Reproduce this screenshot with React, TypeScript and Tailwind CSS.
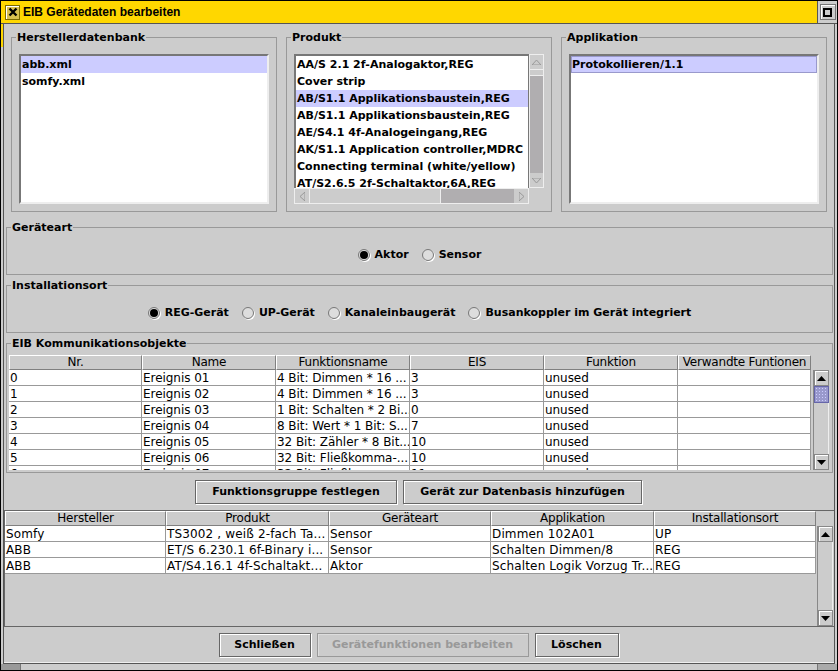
const font = "[font-family:'DejaVu_Sans',sans-serif]";

function Group({ title, className, children }: { title: string; className: string; children?: React.ReactNode }) {
  return (
    <div className={"relative border border-[#999999] " + className}>
      <span className="absolute left-[4px] top-[-8px] bg-[#cccccc] px-[1px] text-[11px] font-bold leading-[16px] text-black whitespace-nowrap">
        {title}
      </span>
      {children}
    </div>
  );
}

function ListRow({ text, selected, focus }: { text: string; selected?: boolean; focus?: boolean }) {
  return (
    <div
      className={
        "h-[17px] shrink-0 whitespace-nowrap text-[11px] font-bold text-black " +
        (selected ? "bg-[#ccccff] " : "") +
        (focus ? "border border-[#9999cc] leading-[15px]" : "pl-[1px] leading-[17px]")
      }
    >
      {text}
    </div>
  );
}

function ListBox({ children }: { children: React.ReactNode }) {
  return (
    <div className="h-[150px] w-[250px] overflow-hidden border-2 border-[#777777] border-r-[#eeeeee] border-b-[#eeeeee] bg-white">
      {children}
    </div>
  );
}

function Radio({ label, on }: { label: string; on?: boolean }) {
  return (
    <div className="flex items-center gap-[5px]">
      <span className="flex h-[12px] w-[12px] items-center justify-center rounded-full border border-[#777777] bg-[#dddddd] shadow-[1px_1px_0_#ffffff]">
        {on && <span className="h-[8px] w-[8px] rounded-full bg-black" />}
      </span>
      <span className="text-[11px] font-bold leading-[16px] text-black whitespace-nowrap">{label}</span>
    </div>
  );
}

function Btn({ label, w, disabled }: { label: string; w: string; disabled?: boolean }) {
  return (
    <div
      className={
        "flex h-[24px] items-center justify-center text-[11px] font-bold whitespace-nowrap " +
        w +
        (disabled
          ? " border border-[#999999] text-[#999999] shadow-[inset_1px_1px_0_#dddddd]"
          : " border border-[#666666] text-black shadow-[1px_1px_0_#ffffff,inset_1px_1px_0_#ffffff]")
      }
    >
      {label}
    </div>
  );
}

function Head({ label, w }: { label: string; w: string }) {
  return (
    <div
      className={
        "h-[15px] shrink-0 whitespace-nowrap overflow-hidden border-t border-l border-t-[#ffffff] border-l-[#ffffff] border-r border-b border-r-[#808080] border-b-[#808080] text-center text-[12px] leading-[13px] tracking-[-0.2px] text-black " +
        w
      }
    >
      {label}
    </div>
  );
}

function Cell({ text, w, track }: { text: string; w: string; track: string }) {
  return (
    <div
      className={
        "h-[16px] shrink-0 overflow-hidden whitespace-nowrap border-r border-b border-[#999999] bg-white pl-[1px] pt-[1px] text-[12px] leading-[14px] text-black " +
        track +
        " " +
        w
      }
    >
      {text}
    </div>
  );
}

function Tri({ up, faded }: { up?: boolean; faded?: boolean }) {
  return (
    <svg width="9" height="5" viewBox="0 0 9 5">
      <polygon points={up ? "4.5,0 9,5 0,5" : "0,0 9,0 4.5,5"} fill={faded ? "none" : "#000000"} stroke={faded ? "#999999" : "none"} />
    </svg>
  );
}

function MetalBar({ h, thumb }: { h: string; thumb?: boolean }) {
  return (
    <div className={"flex w-[16px] shrink-0 flex-col border-l border-[#888888] bg-[#cccccc] " + h}>
      <div className="flex h-[16px] shrink-0 items-center justify-center border border-[#888888] shadow-[inset_1px_1px_0_#ffffff]">
        <Tri up />
      </div>
      {thumb && (
        <div className="h-[17px] shrink-0 border border-[#6666aa] bg-[#9999cc] bg-[radial-gradient(#ccccff_1px,transparent_1px)] bg-[length:3px_3px]" />
      )}
      <div className="flex-1 border-r border-[#eeeeee]" />
      <div className="flex h-[16px] shrink-0 items-center justify-center border border-[#888888] shadow-[inset_1px_1px_0_#ffffff]">
        <Tri />
      </div>
    </div>
  );
}

const products = [
  "AA/S 2.1 2f-Analogaktor,REG",
  "Cover strip",
  "AB/S1.1 Applikationsbaustein,REG",
  "AB/S1.1 Applikationsbaustein,REG",
  "AE/S4.1 4f-Analogeingang,REG",
  "AK/S1.1 Application controller,MDRC",
  "Connecting terminal (white/yellow)",
  "AT/S2.6.5 2f-Schaltaktor,6A,REG",
];

const eibCols = ["w-[133px]", "w-[134px]", "w-[134px]", "w-[134px]", "w-[134px]", "w-[133px]"];
const eibHead = ["Nr.", "Name", "Funktionsname", "EIS", "Funktion", "Verwandte Funtionen"];
const eibRows = [
  ["0", "Ereignis 01", "4 Bit: Dimmen * 16 ...", "3", "unused", ""],
  ["1", "Ereignis 02", "4 Bit: Dimmen * 16 ...", "3", "unused", ""],
  ["2", "Ereignis 03", "1 Bit: Schalten * 2 Bi...", "0", "unused", ""],
  ["3", "Ereignis 04", "8 Bit: Wert * 1 Bit: S...", "7", "unused", ""],
  ["4", "Ereignis 05", "32 Bit: Zähler * 8 Bit...", "10", "unused", ""],
  ["5", "Ereignis 06", "32 Bit: Fließkomma-...", "10", "unused", ""],
  ["6", "Ereignis 07", "32 Bit: Fließkomma-...", "11", "unused", ""],
];

const devCols = ["w-[161px]", "w-[163px]", "w-[162px]", "w-[163px]", "w-[162px]"];
const devHead = ["Hersteller", "Produkt", "Geräteart", "Applikation", "Installationsort"];
const devRows = [
  ["Somfy", "TS3002 , weiß 2-fach Ta...", "Sensor", "Dimmen 102A01", "UP"],
  ["ABB", "ET/S 6.230.1 6f-Binary i...", "Sensor", "Schalten Dimmen/8", "REG"],
  ["ABB", "AT/S4.16.1 4f-Schaltakt...", "Aktor", "Schalten Logik Vorzug Tr...", "REG"],
];

export default function App() {
  return (
    <div className={"flex h-[671px] w-[838px] flex-col overflow-hidden border border-black bg-[#cccccc] " + font}>
      {/* title bar */}
      <div className="flex h-[23px] shrink-0 items-center border-b border-[#555555] bg-[#ffd700] pl-[4px]">
        <div className="flex h-[15px] w-[15px] items-center justify-center border border-[#7a6a00] bg-[#d8c050] shadow-[inset_1px_1px_0_#ffffff]">
          <svg width="10" height="10" viewBox="0 0 10 10">
            <path d="M1.5 1.5 L8.5 8.5 M8.5 1.5 L1.5 8.5" stroke="#000000" strokeWidth="2.4" />
          </svg>
        </div>
        <span className="ml-[3px] flex-1 font-['Liberation_Sans',sans-serif] text-[12px] font-bold text-black">EIB Gerätedaten bearbeiten</span>
        <div className="flex h-[22px] w-[20px] items-center justify-center border-l border-[#555555] bg-[#cccccc]">
          <div className="flex h-[16px] w-[16px] items-center justify-center border border-[#777777] shadow-[inset_1px_1px_0_#ffffff]">
            <div className="h-[9px] w-[9px] border-2 border-black bg-[#cccccc]" />
          </div>
        </div>
      </div>

      {/* frame + body */}
      <div className="relative flex min-h-0 flex-1 flex-col px-[2px]">
        <div className="absolute left-0 top-0 h-[23px] w-[2px] bg-[#ffd700]" />
        <div className="flex min-h-0 flex-1 flex-col border-x border-b border-x-[#555555] border-b-[#555555] shadow-[inset_0_-1px_0_#eeeeee]">
          {/* lists */}
          <div className="mt-[13px] flex gap-[9px] pl-[7px]">
            <Group title="Herstellerdatenbank" className="h-[175px] w-[266px] pl-[7px] pt-[16px]">
              <ListBox>
                <ListRow text="abb.xml" selected />
                <ListRow text="somfy.xml" />
              </ListBox>
            </Group>
            <Group title="Produkt" className="h-[175px] w-[266px] pl-[7px] pt-[16px]">
              <div className="grid h-[150px] w-[250px] grid-cols-[235px_15px] grid-rows-[134px_16px]">
                <div className="overflow-hidden border-t-2 border-l-2 border-r border-[#777777] bg-white">
                  {products.map((p, i) => (
                    <ListRow key={i} text={p} selected={i === 2} />
                  ))}
                </div>
                <div className="flex flex-col border border-[#eeeeee] bg-[#b0aeb0]">
                  <div className="flex h-[14px] items-center justify-center bg-[#cccccc]">
                    <Tri up faded />
                  </div>
                  <div className="h-[7px] border-y border-[#eeeeee] bg-[#cccccc]" />
                  <div className="flex-1" />
                  <div className="flex h-[14px] items-center justify-center bg-[#cccccc]">
                    <Tri faded />
                  </div>
                </div>
                <div className="flex border border-[#eeeeee] bg-[#b0aeb0]">
                  <div className="flex w-[14px] items-center justify-center bg-[#cccccc]">
                    <svg width="5" height="9" viewBox="0 0 5 9">
                      <polygon points="0,4.5 5,0 5,9" fill="none" stroke="#999999" />
                    </svg>
                  </div>
                  <div className="w-[132px] border-x border-[#eeeeee] bg-[#cccccc]" />
                  <div className="flex-1" />
                  <div className="flex w-[14px] items-center justify-center bg-[#cccccc]">
                    <svg width="5" height="9" viewBox="0 0 5 9">
                      <polygon points="5,4.5 0,0 0,9" fill="none" stroke="#999999" />
                    </svg>
                  </div>
                </div>
                <div />
              </div>
            </Group>
            <Group title="Applikation" className="h-[175px] w-[266px] pl-[7px] pt-[16px]">
              <ListBox>
                <ListRow text="Protokollieren/1.1" selected focus />
              </ListBox>
            </Group>
          </div>

          {/* Geräteart */}
          <Group title="Geräteart" className="ml-[2px] mr-[1px] mt-[15px] flex h-[48px] items-center justify-center gap-[13px] pt-[8px]">
            <Radio label="Aktor" on />
            <Radio label="Sensor" />
          </Group>

          {/* Installationsort */}
          <Group title="Installationsort" className="ml-[2px] mr-[1px] mt-[10px] flex h-[48px] items-center justify-center gap-[13px] pt-[8px]">
            <Radio label="REG-Gerät" on />
            <Radio label="UP-Gerät" />
            <Radio label="Kanaleinbaugerät" />
            <Radio label="Busankoppler im Gerät integriert" />
          </Group>

          {/* EIB */}
          <Group title="EIB Kommunikationsobjekte" className="ml-[2px] mr-[1px] mt-[10px] flex h-[130px] pl-[2px] pt-[11px]">
            <div className="flex h-[115px] w-[803px] flex-col overflow-hidden">
              <div className="flex">
                {eibHead.map((h, i) => (
                  <Head key={i} label={h} w={eibCols[i]} />
                ))}
              </div>
              {eibRows.map((r, ri) => (
                <div key={ri} className="flex">
                  {r.map((c, i) => (
                    <Cell key={i} text={c} w={eibCols[i]} track="tracking-[-0.05px]" />
                  ))}
                </div>
              ))}
            </div>
            <div className="ml-[1px] mt-[15px]">
              <MetalBar h="h-[100px]" thumb />
            </div>
          </Group>

          {/* Buttons */}
          <div className="mt-[7px] flex justify-center gap-[6px] pr-[1px]">
            <Btn label="Funktionsgruppe festlegen" w="w-[202px]" />
            <Btn label="Gerät zur Datenbasis hinzufügen" w="w-[239px]" />
          </div>

          {/* device table */}
          <div className="mt-[6px] flex h-[117px] border-t border-l border-b border-[#666666]">
            <div className="flex min-w-0 flex-1 flex-col">
              <div className="flex">
                {devHead.map((h, i) => (
                  <Head key={i} label={h} w={devCols[i]} />
                ))}
              </div>
              {devRows.map((r, ri) => (
                <div key={ri} className="flex">
                  {r.map((c, i) => (
                    <Cell key={i} text={c} w={devCols[i]} track="tracking-[0.15px]" />
                  ))}
                </div>
              ))}
            </div>
            <div className="mr-[1px] mt-[15px]">
              <MetalBar h="h-[100px]" />
            </div>
          </div>

          {/* Bottom buttons */}
          <div className="mt-[6px] flex justify-center gap-[6px] pr-[1px]">
            <Btn label="Schließen" w="w-[92px]" />
            <Btn label="Gerätefunktionen bearbeiten" w="w-[212px]" disabled />
            <Btn label="Löschen" w="w-[84px]" />
          </div>
        </div>

        {/* bottom frame strip */}
        <div className="mx-[-2px] flex h-[6px] shrink-0">
          <div className="w-[20px] border-r border-[#777777] bg-[#999999]" />
          <div className="flex-1" />
          <div className="w-[20px] border-l border-[#777777] bg-[#aaaaaa]" />
        </div>
      </div>
    </div>
  );
}
